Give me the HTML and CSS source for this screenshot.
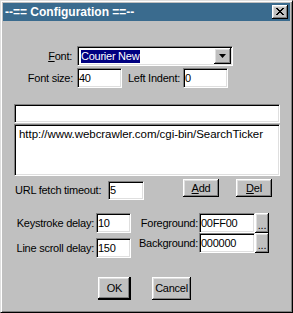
FILE: index.html
```html
<!DOCTYPE html>
<html lang="en">
<head>
    <meta charset="UTF-8">
    <title>Configuration</title>
    <link rel="stylesheet" href="styles.css">
</head>
<body>
    <div class="window">
        <div class="titlebar">
            <span class="title">--== Configuration ==--</span>
            <div class="btn close-btn">
                <svg width="8" height="7" viewBox="0 0 8 7">
                    <path d="M0 0h2v1h1v1h2v-1h1v-1h2v1h-1v1h-1v1h-1v1h1v1h1v1h1v1h-2v-1h-1v-1h-2v1h-1v1h-2v-1h1v-1h1v-1h1v-1h-1v-1h-1v-1h-1z" fill="#000"/>
                </svg>
            </div>
        </div>

        <div class="client">
            <div class="row row-font">
                <label class="lbl lbl-font"><u>F</u>ont:</label>
                <div class="combo">
                    <div class="combo-value"><span class="sel">Courier New</span></div>
                    <div class="btn combo-btn">
                        <svg width="7" height="4" viewBox="0 0 7 4"><path d="M0 0h7l-3.5 4z" fill="#000"/></svg>
                    </div>
                </div>
            </div>

            <div class="row row-size">
                <label class="lbl lbl-size">Font size:</label>
                <div class="field f-size">40</div>
                <label class="lbl lbl-indent">Left Indent:</label>
                <div class="field f-indent">0</div>
            </div>

            <div class="field url-input"></div>
            <div class="field url-list">http://www.webcrawler.com/cgi-bin/SearchTicker</div>

            <div class="row row-timeout">
                <label class="lbl lbl-timeout">URL fetch timeout:</label>
                <div class="field f-timeout">5</div>
                <div class="btn push btn-add"><u>A</u>dd</div>
                <div class="btn push btn-del"><u>D</u>el</div>
            </div>

            <div class="delays">
                <div class="col col-left">
                    <div class="row">
                        <label class="lbl lbl-delay">Keystroke delay:</label>
                        <div class="field f-delay">10</div>
                    </div>
                    <div class="row row-gap">
                        <label class="lbl lbl-delay">Line scroll delay:</label>
                        <div class="field f-delay">150</div>
                    </div>
                </div>
                <div class="col col-right">
                    <div class="row">
                        <label class="lbl lbl-color">Foreground:</label>
                        <div class="field f-color">00FF00</div>
                        <div class="btn push btn-pick">...</div>
                    </div>
                    <div class="row">
                        <label class="lbl lbl-color">Background:</label>
                        <div class="field f-color">000000</div>
                        <div class="btn push btn-pick">...</div>
                    </div>
                </div>
            </div>

            <div class="actions">
                <div class="btn push btn-ok">OK</div>
                <div class="btn push btn-cancel">Cancel</div>
            </div>
        </div>
    </div>
</body>
</html>
```

FILE: styles.css
```css
body {
    margin: 0;
    background: #c0c0c0;
    font-family: "Liberation Sans", Arial, sans-serif;
    font-size: 11px;
    letter-spacing: -0.25px;
    color: #000;
}

.window {
    box-sizing: border-box;
    width: 293px;
    height: 313px;
    padding: 2px;
    background: #c0c0c0;
    border: 1px solid;
    border-color: #dfdfdf #000 #000 #dfdfdf;
    box-shadow: inset 1px 1px #fff, inset -1px -1px #808080;
}

.titlebar {
    display: flex;
    align-items: center;
    justify-content: space-between;
    height: 18px;
    padding: 0 2px;
    background: #3a6b8e;
}

.title {
    color: #fff;
    font-size: 12px;
    font-weight: bold;
    letter-spacing: 0;
}

/* raised 3d button */
.btn {
    box-sizing: border-box;
    display: flex;
    align-items: center;
    justify-content: center;
    background: #c0c0c0;
    box-shadow: inset -1px -1px #000, inset 1px 1px #fff, inset -2px -2px #808080, inset 2px 2px #dfdfdf;
}

.close-btn {
    width: 16px;
    height: 14px;
    padding: 0 1px 1px 0;
}

/* sunken field */
.field {
    box-sizing: border-box;
    background: #fff;
    border: 1px solid;
    border-color: #808080 #fff #fff #808080;
    box-shadow: inset 1px 1px #000, inset -1px -1px #dfdfdf;
    padding: 2px 2px 2px 1px;
    line-height: 14px;
    white-space: nowrap;
}

.row {
    display: flex;
    align-items: center;
}

.lbl {
    text-align: right;
    white-space: nowrap;
}

.row-font {
    margin-top: 25px;
    height: 20px;
}

.lbl-font {
    width: 69px;
    margin-right: 5px;
}

.combo {
    box-sizing: border-box;
    display: flex;
    width: 156px;
    height: 20px;
    padding: 2px;
    background: #fff;
    border: 1px solid;
    border-color: #808080 #fff #fff #808080;
    box-shadow: inset 1px 1px #000, inset -1px -1px #dfdfdf;
}

.combo-value {
    flex: 1;
    padding: 1px 0 0 1px;
}

.sel {
    display: inline-block;
    background: #000080;
    color: #fff;
    line-height: 13px;
    padding-right: 1px;
}

.combo-btn {
    width: 17px;
    height: 16px;
    margin: -1px -1px 0 0;
}

.row-size {
    margin-top: 2px;
}

.lbl-size {
    width: 70px;
    margin-right: 4px;
}

.f-size,
.f-indent {
    width: 45px;
    height: 20px;
}

.lbl-indent {
    width: 58px;
    margin-right: 3px;
}

.url-input {
    width: 266px;
    height: 19px;
    margin: 16px 0 0 11px;
}

.url-list {
    width: 266px;
    height: 52px;
    margin: 1px 0 0 11px;
    padding: 2px 4px;
    font-size: 11.5px;
    letter-spacing: -0.05px;
}

.row-timeout {
    align-items: flex-start;
    margin-top: 3px;
}

.lbl-timeout {
    width: 93px;
    margin: 5px 0 0 12px;
    text-align: left;
}

.f-timeout {
    width: 36px;
    height: 19px;
    margin-top: 2px;
    padding-top: 1px;
}

.push {
    height: 18px;
    padding-bottom: 1px;
}

.btn-add {
    width: 36px;
    margin-left: 39px;
}

.btn-del {
    width: 36px;
    margin-left: 17px;
}

.delays {
    display: flex;
    align-items: flex-start;
    margin-top: 13px;
}

.col-left {
    width: 128px;
}

.row-gap {
    margin-top: 5px;
}

.lbl-delay {
    width: 91px;
    margin-right: 2px;
}

.f-delay {
    width: 35px;
    height: 20px;
}

.lbl-color {
    width: 67px;
    margin-right: 1px;
}

.f-color {
    width: 56px;
    height: 20px;
}

.btn-pick {
    width: 14px;
    height: 20px;
    align-items: flex-end;
    padding-bottom: 4px;
    line-height: 8px;
}

.actions {
    display: flex;
    gap: 21px;
    margin: 19px 0 0 95px;
}

.btn-ok {
    width: 33px;
    height: 23px;
    box-shadow: inset -2px -2px #000, inset 1px 1px #fff, inset -3px -3px #808080, inset 2px 2px #dfdfdf;
}

.btn-cancel {
    width: 39px;
    height: 23px;
}
```
